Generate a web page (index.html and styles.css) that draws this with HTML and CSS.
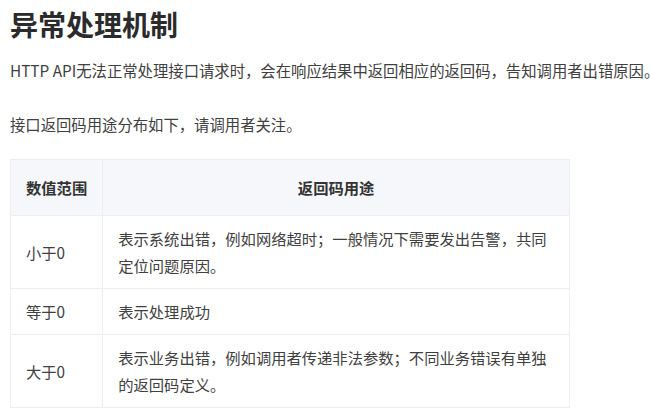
FILE: index.html
```html
<!DOCTYPE html>
<html lang="zh-CN">
<head>
<meta charset="utf-8">
<link rel="stylesheet" href="styles.css">
</head>
<body>
<main class="doc">
  <h1 class="title">异常处理机制</h1>
  <p class="para para-first">HTTP API无法正常处理接口请求时，会在响应结果中返回相应的返回码，告知调用者出错原因。</p>
  <p class="para para-second">接口返回码用途分布如下，请调用者关注。</p>
  <table class="codes">
    <thead>
      <tr>
        <th class="col-range">数值范围</th>
        <th class="col-use">返回码用途</th>
      </tr>
    </thead>
    <tbody>
      <tr>
        <td>小于0</td>
        <td>表示系统出错，例如网络超时；一般情况下需要发出告警，共同定位问题原因。</td>
      </tr>
      <tr>
        <td>等于0</td>
        <td>表示处理成功</td>
      </tr>
      <tr>
        <td>大于0</td>
        <td>表示业务出错，例如调用者传递非法参数；不同业务错误有单独的返回码定义。</td>
      </tr>
    </tbody>
  </table>
</main>
</body>
</html>
```
FILE: styles.css
```css
html, body {
  margin: 0;
  padding: 0;
  background: #ffffff;
  overflow: hidden;
}

body {
  font-family: "Noto Sans CJK SC", "Noto Sans", sans-serif;
  color: #3a3a3a;
}

.doc {
  padding: 4px 0 0 10px;
}

.title {
  margin: 0;
  font-size: 28px;
  line-height: 40px;
  font-weight: 700;
  color: #2b2b2b;
}

.para {
  margin: 14px 0 0 0;
  font-size: 15.35px;
  line-height: 24px;
  color: #404040;
}

.para-first {
  white-space: nowrap;
}

.para-second {
  margin-top: 30px;
}

.codes {
  margin-top: 23px;
  width: 560px;
  border-collapse: collapse;
  font-size: 15.3px;
  line-height: 27px;
  color: #404040;
}

.codes th,
.codes td {
  border: 1px solid #eceef2;
  padding: 9px 15px;
  text-align: left;
  vertical-align: middle;
}

.codes th {
  background: #f5f7fa;
  padding-top: 14px;
  padding-bottom: 14px;
  font-weight: 700;
  color: #333333;
}

.codes .col-range {
  width: 61px;
  white-space: nowrap;
}

.codes .col-use {
  text-align: center;
}
```
